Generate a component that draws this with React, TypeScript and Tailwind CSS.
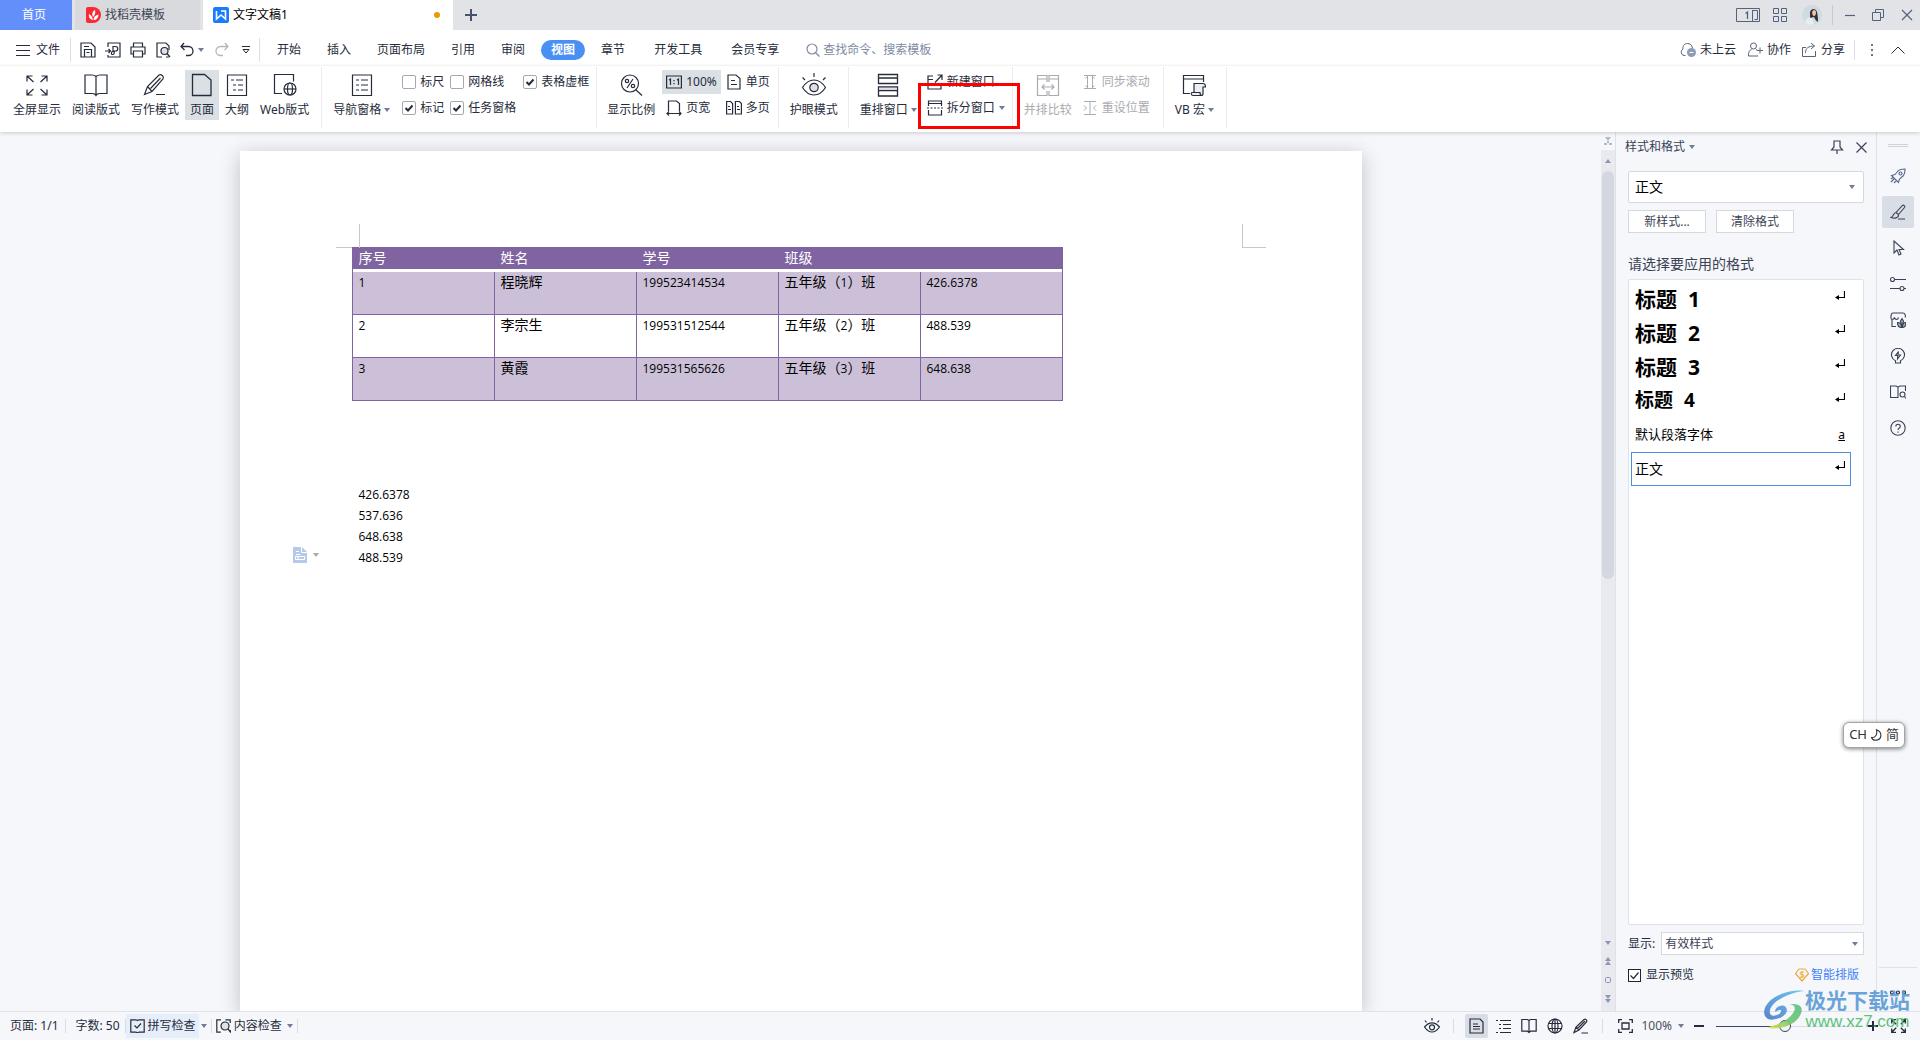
import type { ReactNode } from "react";

type IconProps = { w?: number; h?: number; sw?: number; className?: string; children: ReactNode };

function Svg({ w = 16, h = 16, sw = 1, className = "", children }: IconProps) {
  return (
    <svg
      width={w}
      height={h}
      viewBox={`0 0 ${w} ${h}`}
      fill="none"
      stroke="currentColor"
      strokeWidth={sw}
      className={`shrink-0 ${className}`}
      aria-hidden="true"
    >
      {children}
    </svg>
  );
}

function Caret({ className = "text-[#6f7c98]" }: { className?: string }) {
  return (
    <Svg w={6} h={4} className={className}>
      <path d="M0 0h6L3 4z" fill="currentColor" stroke="none" />
    </Svg>
  );
}

function Big({ icon, label, caret, active, muted }: { icon: ReactNode; label: string; caret?: boolean; active?: boolean; muted?: boolean }) {
  return (
    <button
      className={`flex h-[50px] shrink-0 flex-col items-center gap-[5px] px-[5px] pt-[3px] whitespace-nowrap ${active ? "bg-[#dbe0e5]" : ""} ${muted ? "text-[#a9abb0]" : ""}`}
    >
      {icon}
      <span className="flex items-center gap-[3px] leading-4">
        {label}
        {caret && <Caret />}
      </span>
    </button>
  );
}

function Small({ icon, label, caret, active, muted, children }: { icon: ReactNode; label: string; caret?: boolean; active?: boolean; muted?: boolean; children?: ReactNode }) {
  return (
    <button
      className={`relative flex h-6 shrink-0 items-center gap-1 px-1 whitespace-nowrap ${active ? "bg-[#dbe0e5]" : ""} ${muted ? "text-[#a9abb0]" : ""}`}
    >
      {icon}
      <span className="leading-4">{label}</span>
      {caret && <Caret />}
      {children}
    </button>
  );
}

function Check({ label, checked }: { label: string; checked?: boolean }) {
  return (
    <label className="flex h-6 items-center gap-1 whitespace-nowrap">
      <span className="relative flex size-[14px]">
        <input
          type="checkbox"
          defaultChecked={checked}
          className="peer size-[14px] appearance-none rounded-[2px] border border-[#a3a8b3] bg-white"
        />
        <Svg w={14} h={14} sw={2} className="pointer-events-none absolute inset-0 hidden peer-checked:block">
          <path d="M3.5 7l2.500 2.500 4.500-5" />
        </Svg>
      </span>
      <span className="leading-4">{label}</span>
    </label>
  );
}

function Group({ children, className }: { children: ReactNode; className: string }) {
  return <div className={`flex h-[61px] shrink-0 gap-px border-r border-[#ebecee] pt-[3px] ${className}`}>{children}</div>;
}

function Globe() {
  return (
    <Svg sw={1.2}>
      <circle cx="8" cy="8" r="7" />
      <ellipse cx="8" cy="8" rx="3" ry="7" />
      <path d="M1.500 5.500h13M1.500 10.500h13M8 1v14" />
    </Svg>
  );
}

function TitleBar() {
  return (
    <header className="flex h-[30px] items-stretch bg-[#e1e3e7]">
      <button className="w-[72px] bg-[#638ffb] pr-1 text-white">首页</button>
      <button className="ml-[3px] flex w-[125px] items-center gap-1 bg-[#d9dadd] pl-[11px] text-[#3f4454]">
        <Svg w={15} h={16}>
          <path d="M0 2a2 2 0 0 1 2-2h5a8 8 0 0 1 0 16H2a2 2 0 0 1-2-2z" fill="#fa2a35" stroke="none" />
          <path d="M7 13C3 12 2.500 9 3 7c2 1 3.500 3 4 6zM7 10C5.500 7 6.500 4.500 9 3c.8 3 0 5-2 7zM7.500 13c0-3 2-5 5-5.500C12.500 11 10.500 13 7.500 13z" fill="#fff" stroke="none" />
        </Svg>
        找稻壳模板
      </button>
      <div className="ml-[3px] flex w-[250px] items-center gap-1 bg-white pl-[10px] pr-[13px] text-black">
        <Svg>
          <rect width="16" height="16" rx="2" fill="#1a7cfb" stroke="none" />
          <path d="M3.500 4v8l4.500-4 4.500 4V4H8" stroke="#fff" strokeWidth="1.600" />
        </Svg>
        <span className="flex-1">文字文稿1</span>
        <span className="size-[6px] rounded-full bg-[#e69b00]" />
      </div>
      <button aria-label="新建" className="ml-3 text-[#47526f]">
        <Svg w={12} h={12} sw={2}>
          <path d="M6 0v12M0 6h12" />
        </Svg>
      </button>
      <div className="ml-auto flex items-center pr-[7px] text-[#54617f]">
        <button aria-label="窗口">
          <Svg w={24} h={14}>
            <path d="M.5 .5h23v13H.5zM16.500 2.500h5v9M16.500 2v11.500M18.500 11.500h3" />
            <path d="M9.500 5.500l2-1.500v7" strokeWidth="1.300" />
          </Svg>
        </button>
        <button aria-label="应用" className="ml-[13px]">
          <Svg w={14} h={14}>
            <path d="M.5.5h5v5h-5zM8.500.5h5v5h-5zM.5 8.500h5v5h-5zM8.500 8.500h5v5h-5z" />
          </Svg>
        </button>
        <button aria-label="账户" className="ml-[15px]">
          <Svg w={20} h={20}>
            <circle cx="10" cy="10" r="10" fill="#cfdbe0" stroke="none" />
            <path d="M8 7c1-4 6-4 7 0 1 4 1 8 1 10-2-1-3-3-4-5-2 0-3 1-4 2z" fill="#3a3036" stroke="none" />
            <path d="M10.500 6c1.500-2 3.500-1 3.500 1.500s-1 3.500-2 3.500-2.500-2.500-1.500-5z" fill="#eec4b0" stroke="none" />
            <path d="M3 17c2-5 5-5 7-4l2 6c-4 2-7 0-9-2z" fill="#e6eef1" stroke="none" />
          </Svg>
        </button>
        <span className="ml-[10px] h-5 w-px bg-[#c6c9d0]" />
        <button aria-label="最小化" className="ml-3">
          <Svg w={10} h={12} sw={1.2}>
            <path d="M0 6.500h10" />
          </Svg>
        </button>
        <button aria-label="还原" className="ml-[17px]">
          <Svg w={12} h={12}>
            <path d="M.5 3.500h8v8h-8zM3.500 3V.5h8v8H9" />
          </Svg>
        </button>
        <button aria-label="关闭" className="ml-[17px]">
          <Svg w={12} h={12} sw={1.2}>
            <path d="M1 1l10 10M11 1L1 11" />
          </Svg>
        </button>
      </div>
    </header>
  );
}

const MENU_A = ["开始", "插入", "页面布局", "引用", "审阅"];

function MenuRow() {
  return (
    <nav className="flex h-9 items-center bg-white pt-[3px] pr-[15px]">
      <button className="ml-4 flex items-center gap-[6px]">
        <Svg w={14} h={12}>
          <path d="M0 1.500h14M0 6.500h14M0 11.500h14" />
        </Svg>
        文件
      </button>
      <span className="ml-[10px] h-6 w-px bg-[#dcdee2]" />
      <div className="ml-[9px] flex items-center">
        <button aria-label="保存">
          <Svg sw={1.2}>
            <path d="M1 1h10l4 4v10H1zM4.500 15V7.500h7V15M4 4.500h5M6.500 10.500h3" />
          </Svg>
        </button>
        <button aria-label="输出为PDF" className="ml-[9px]">
          <Svg sw={1.2}>
            <path d="M3 5V1h12v14H3v-2M0 9h5M3.500 7l2 2-2 2M8 10V4.500h2.500a2 2 0 0 1 0 4.500H8.500c-2 0-3 3.500-1 3.500s2-2 1.500-3.500" />
          </Svg>
        </button>
        <button aria-label="打印" className="ml-[9px]">
          <Svg sw={1.2}>
            <path d="M3.500 5V1h9v4M3.500 12H1V5h14v7h-2.500M3.500 9h9v6h-9z" />
          </Svg>
        </button>
        <button aria-label="打印预览" className="ml-[9px]">
          <Svg sw={1.2}>
            <path d="M7 15H2V1h9l3 3v4M14 15h-3" />
            <circle cx="9.500" cy="9" r="3.500" fill="#dfe1e5" />
            <path d="M12 11.500l3 3.500" />
          </Svg>
        </button>
        <button aria-label="撤销" className="ml-[9px]">
          <Svg sw={1.3} w={14}>
            <path d="M4 1L1 4.500 4.500 8M1 4.500h7.500a4.500 4.500 0 0 1 0 9H6" />
          </Svg>
        </button>
        <button aria-label="撤销列表" className="ml-1">
          <Caret />
        </button>
        <button aria-label="恢复" className="ml-[11px] text-[#b4b6bb]">
          <Svg sw={1.3} w={14}>
            <path d="M10 1l3 3.500L9.500 8M13 4.500H5.500a4.500 4.500 0 0 0 0 9H8" />
          </Svg>
        </button>
        <button aria-label="自定义" className="ml-[13px]">
          <Svg w={8} h={10}>
            <path d="M0 1.500h8M1 4.500h6L4 8z" />
          </Svg>
        </button>
      </div>
      <span className="ml-[9px] h-6 w-px bg-[#dcdee2]" />
      <div className="ml-1 flex items-center">
        {MENU_A.map((m) => (
          <button key={m} className="px-[13px]">
            {m}
          </button>
        ))}
        <button className="mx-[3px] h-5 rounded-full bg-[#4a90f4] px-[10px] font-bold text-white">视图</button>
        <button className="px-[13px]">章节</button>
        <button className="px-4">开发工具</button>
        <button className="px-[13px]">会员专享</button>
      </div>
      <label className="ml-[14px] flex items-center gap-[3px] text-[#7e8aa3]">
        <Svg w={14} h={14} sw={1.2}>
          <circle cx="6" cy="6" r="5" />
          <path d="M9.500 9.500l4 4" />
        </Svg>
        <input aria-label="搜索" placeholder="查找命令、搜索模板" className="w-[120px] bg-transparent outline-none placeholder:text-[#7e8aa3]" />
      </label>
      <div className="ml-auto flex items-center">
        <button className="flex items-center gap-1">
          <Svg className="text-[#596276]">
            <path d="M5.500 13.500H4a3.500 3.500 0 0 1-1-6.500C2.500 3 5 1.500 7.500 1.500S12 3 12.500 6" />
            <circle cx="11.500" cy="10.500" r="4.500" fill="#8f9bb5" stroke="none" />
            <path d="M9.500 10.500h4" stroke="#fff" />
          </Svg>
          未上云
        </button>
        <button className="ml-[11px] flex items-center gap-1">
          <Svg className="text-[#596276]">
            <circle cx="6.500" cy="4" r="3" />
            <path d="M4.500 7.500C2 8.500 1.500 10 1.500 14h9.500M9 7.500c1 .5 1.500 1 2 1.500M13 5.500v6M10 8.500h6" />
          </Svg>
          协作
        </button>
        <button className="ml-[10px] flex items-center gap-1">
          <Svg className="text-[#596276]">
            <path d="M5 5.500H1.500v9h13V9M4.500 11c0-5 3-7 9-7M10 1l3.500 3L10 7" />
          </Svg>
          分享
        </button>
        <span className="ml-[9px] h-5 w-px bg-[#dcdee2]" />
        <button aria-label="更多" className="ml-4">
          <Svg w={2} h={12} className="text-[#6c7382]">
            <path d="M0 0h2v2H0zM0 5h2v2H0zM0 10h2v2H0z" fill="currentColor" stroke="none" />
          </Svg>
        </button>
        <button aria-label="折叠功能区" className="ml-[18px]">
          <Svg w={14} h={8}>
            <path d="M.5 7.500L7 1l6.500 6.500" />
          </Svg>
        </button>
      </div>
    </nav>
  );
}

function Ribbon() {
  return (
    <section className="relative z-10 flex h-[66px] bg-white pt-px shadow-[0_1px_4px_rgba(0,0,0,0.18)]">
      <Group className="pr-[7px] pl-2">
        <Big
          label="全屏显示"
          icon={
            <Svg w={24} h={24} sw={1.2}>
              <path d="M2 8.500V3h5.500M2 3l6.500 6M16.500 3H22v5.500M22 3l-6.500 6M2 16.500V22h5.500M2 22l6.500-6M16.500 22H22v-5.500M22 22l-6.500-6" />
            </Svg>
          }
        />
        <Big
          label="阅读版式"
          icon={
            <Svg w={24} h={24} sw={1.2}>
              <path d="M12 3.500C11 2.500 10 2 8 2H1v18.500h7.500c2 0 3 1 3.500 2 .5-1 1.500-2 3.500-2H23V2h-7c-2 0-3 .5-4 1.500zM12 3.500v19" />
            </Svg>
          }
        />
        <Big
          label="写作模式"
          icon={
            <Svg w={24} h={24} sw={1.2}>
              <path d="M1.500 21.500l3-8L16 2c2-1.500 5.500 1.500 4 4L9 18.500zM4.500 13.500l4.500 5M7.500 15.500L17.500 5M13 21.500h9" />
            </Svg>
          }
        />
        <Big
          active
          label="页面"
          icon={
            <Svg w={24} h={24} sw={1.3}>
              <path d="M2.500 1.500h12l6.500 5.500v15.500H2.500z" />
            </Svg>
          }
        />
        <Big
          label="大纲"
          icon={
            <Svg w={24} h={24} sw={1.2}>
              <path d="M2.500 2h19v20.500h-19zM6 7h3M8 12h3M8 17h3M11 7h7M13 12h5M13 17h5" />
            </Svg>
          }
        />
        <Big
          label="Web版式"
          icon={
            <Svg w={24} h={24} sw={1.2}>
              <path d="M9 20.500H1.500v-19h19v7" />
              <circle cx="17" cy="16" r="6" />
              <ellipse cx="17" cy="16" rx="2.500" ry="6" />
              <path d="M11 16h12" />
            </Svg>
          }
        />
      </Group>
      <Group className="pr-2 pl-[6px]">
        <Big
          caret
          label="导航窗格"
          icon={
            <Svg w={24} h={24} sw={1.2}>
              <path d="M2.500 2h19v20.500h-19zM6 7h3M6 12h3M6 17h3M11 7h7M11 12h7M11 17h7" />
            </Svg>
          }
        />
        <div className="ml-[6px] grid grid-cols-[48px_73px_65px] content-start gap-y-[2px]">
          <Check label="标尺" />
          <Check label="网格线" />
          <Check label="表格虚框" checked />
          <Check label="标记" checked />
          <Check label="任务窗格" checked />
        </div>
      </Group>
      <Group className="pr-1 pl-[5px]">
        <Big
          label="显示比例"
          icon={
            <Svg w={24} h={24} sw={1.2}>
              <circle cx="11" cy="10.500" r="8.500" />
              <path d="M17 17l6 5.500M14 6l-6 9" />
              <circle cx="8" cy="8" r="1.700" />
              <circle cx="14" cy="13" r="1.700" />
            </Svg>
          }
        />
        <div className="ml-px flex flex-col items-start gap-[2px]">
          <Small
            active
            label="100%"
            icon={
              <Svg sw={1.2}>
                <path d="M.6 2h14.800v12H.6zM3 6l1.500-1v6M11 6l1.500-1v6M8 6v1.300M8 9v1.300" />
              </Svg>
            }
          />
          <Small
            label="页宽"
            icon={
              <Svg sw={1.2}>
                <path d="M2.500 11V1h8l3 2.500V11M1 13.500h14M3 11.500l-2 2 2 2M13 11.500l2 2-2 2" />
              </Svg>
            }
          />
        </div>
        <div className="flex flex-col items-start gap-[2px]">
          <Small
            label="单页"
            icon={
              <Svg sw={1.2}>
                <path d="M2 1h8l4 3.500V15H2zM5 6.500h4M5 10.500h6" />
              </Svg>
            }
          />
          <Small
            label="多页"
            icon={
              <Svg sw={1.2}>
                <path d="M.6 1.500h4l2 2V14h-6zM9.400 1.500h4l2 2V14h-6zM2 6.500h2M2 9.500h3M11 6.500h2M11 9.500h3" />
              </Svg>
            }
          />
        </div>
      </Group>
      <Group className="pr-[5px] pl-[6px]">
        <Big
          label="护眼模式"
          icon={
            <Svg w={24} h={24} sw={1.2}>
              <path d="M.5 14.500C4 9 8 7 12 7s8 2 11.500 7.500C20 20 16 22 12 22S4 20 .5 14.500zM12 4V0M3 7L.5 4.500M21 7l2.500-2.500" />
              <circle cx="12" cy="14.500" r="4.200" fill="#dfe1e5" />
            </Svg>
          }
        />
      </Group>
      <Group className="pr-[3px] pl-[6px]">
        <Big
          caret
          label="重排窗口"
          icon={
            <Svg w={24} h={24} sw={1.3}>
              <path d="M2.500 1.500h19v9h-19zM2.500 14h19v9h-19z" />
              <path d="M2.500 5h19M2.500 17.500h19" />
              <path d="M3 15.700h18" stroke="#dfe1e5" strokeWidth="2" />
            </Svg>
          }
        />
        <div className="flex flex-col items-start gap-[2px]">
          <Small
            label="新建窗口"
            icon={
              <Svg sw={1.2}>
                <path d="M6 2H1v13h13v-5M1 5.500h5M8 8.500L15 1M10.500 1H15v5" />
              </Svg>
            }
          />
          <Small
            caret
            label="拆分窗口"
            icon={
              <Svg sw={1.2}>
                <path d="M1.500 6V1h13v5M1.500 3.500h13M1.500 10v5h13v-5" />
                <path d="M0 8h16" strokeDasharray="2 1.500" />
              </Svg>
            }
          >
            <span className="pointer-events-none absolute -top-[13px] -right-[11px] -bottom-[9px] -left-[5px] z-20 border-[3px] border-[#fe0000]" />
          </Small>
        </div>
      </Group>
      <Group className="pr-[9px] pl-[6px]">
        <Big
          muted
          label="并排比较"
          icon={
            <Svg w={24} h={24} sw={1.2}>
              <path d="M8 22.500H1.500v-20h9.500V9M16 22.500h6.500v-20H13V9M1.500 6H11M13 6h9.500M11 18v4.500H8M13 18v4.500h3M6 14h12M8.500 11.500L6 14l2.500 2.500M15.500 11.500L18 14l-2.500 2.500" />
            </Svg>
          }
        />
        <div className="flex flex-col items-start gap-[2px]">
          <Small
            muted
            label="同步滚动"
            icon={
              <Svg>
                <path d="M2 1.500h12M2 14.500h12M5.500 2v12M10.500 2v12M3.500 4.500l2-2M12.500 4.500l-2-2M3.500 11.500l2 2M12.500 11.500l-2 2" />
              </Svg>
            }
          />
          <Small
            muted
            label="重设位置"
            icon={
              <Svg>
                <path d="M2 1.500h12M2 14.500h12M8 2v12M2 5.500L4.500 8 2 10.500M14 5.500L11.500 8l2.500 2.500" />
              </Svg>
            }
          />
        </div>
      </Group>
      <Group className="pr-[7px] pl-[6px]">
        <Big
          caret
          label="VB 宏"
          icon={
            <Svg w={24} h={24} sw={1.2}>
              <path d="M8 20.500H1.500v-18h20V9M1.500 6h20" />
              <path d="M12 19v-8.500h9c2 0 2.500 1 2.500 3.500H21v6.500c0 1.500-1 2-2 2h-8c-2 0-2-3-1-3h8c0 2 .5 3 1.500 3" fill="#eceef0" />
            </Svg>
          }
        />
      </Group>
    </section>
  );
}

function Num({ children }: { children: ReactNode }) {
  return <span className="font-['Open_Sans','Noto_Sans',sans-serif] text-xs">{children}</span>;
}

const ROWS = [
  ["1", "程晓辉", "199523414534", "1", "426.6378"],
  ["2", "李宗生", "199531512544", "2", "488.539"],
  ["3", "黄霞", "199531565626", "3", "648.638"],
];

const VALUES = ["426.6378", "537.636", "648.638"];

function DocumentPage() {
  return (
    <main className="flex flex-1 justify-center overflow-hidden pt-[19px]">
      <article className="relative w-[1122px] shrink-0 bg-white px-28 pt-24 text-sm leading-[21px] text-black shadow-[0_4px_20px_rgba(0,0,0,0.22)]">
        <span className="absolute top-[73px] left-[119px] h-6 w-px bg-[#c8c8c8]" />
        <span className="absolute top-24 left-24 h-px w-4 bg-[#c8c8c8]" />
        <span className="absolute top-[73px] right-24 h-6 w-6 border-b border-l border-[#c8c8c8]" />
        <table className="w-[711px] table-fixed border-separate border-spacing-0 border-x border-[#8064a2]">
          <colgroup>
            <col className="w-[142px]" />
            <col className="w-[142px]" />
            <col className="w-[142px]" />
            <col className="w-[142px]" />
            <col />
          </colgroup>
          <thead>
            <tr>
              {["序号", "姓名", "学号", "班级", ""].map((h) => (
                <th key={h} className="h-[25px] border-b-[3px] border-white bg-[#8064a2] p-0 pl-[6px] text-left leading-5 font-normal text-white">
                  {h}
                </th>
              ))}
            </tr>
          </thead>
          <tbody>
            {ROWS.map((r) => (
              <tr key={r[0]} className="align-top leading-[19px] odd:bg-[#ccc0d9]">
                {r.map((c, i) => (
                  <td key={i} className="h-[43px] border-r border-b border-[#8064a2] p-0 pl-[6px] last:border-r-0">
                    {i === 1 ? (
                      c
                    ) : i === 3 ? (
                      <>
                        五年级（<Num>{c}</Num>）班
                      </>
                    ) : (
                      <Num>{c}</Num>
                    )}
                  </td>
                ))}
              </tr>
            ))}
          </tbody>
        </table>
        <div className="pt-[82px] pl-[7px]">
          {VALUES.map((v) => (
            <p key={v}>
              <Num>{v}</Num>
            </p>
          ))}
          <div className="relative">
            <Num>488.539</Num>
            <button aria-label="粘贴选项" className="absolute top-px -left-[66px] flex items-center gap-[6px]">
              <Svg w={14} h={16}>
                <path d="M0 0h9l5 5v11H0z" fill="#b5c9e8" stroke="none" />
                <path d="M8.500 0v5.500H14M3 4.500h3M3 7.500h4M2.500 12.500v-3h9v3zM5 9v4" stroke="#fff" />
              </Svg>
              <Caret className="text-[#a9a9a9]" />
            </button>
          </div>
        </div>
      </article>
    </main>
  );
}

function ScrollColumn() {
  return (
    <div className="flex w-[15px] shrink-0 flex-col items-center border-r border-[#dfe1e6] bg-[#e8eaef] text-[#8c97b2]">
      <div className="flex h-[18px] w-full items-center justify-center bg-[#f5f7fa]">
        <Svg w={8} h={9} className="text-[#b3bacb]">
          <path d="M1 0h6L4 4zM3 4h2v2H3zM0 6h3v2H0zM5 6h3v2H5z" fill="currentColor" stroke="none" />
        </Svg>
      </div>
      <button aria-label="向上" className="flex h-[21px] items-center">
        <Svg w={6} h={4}>
          <path d="M0 4h6L3 0z" fill="currentColor" stroke="none" />
        </Svg>
      </button>
      <div className="w-full flex-1">
        <div className="mx-auto h-[53%] w-3 rounded-full bg-[#d4d7e0]" />
      </div>
      <div className="flex flex-col items-center gap-3 pb-2">
        <button aria-label="向下">
          <Caret className="text-[#8c97b2]" />
        </button>
        <button aria-label="上一页">
          <Svg w={6} h={8}>
            <path d="M0 4h6L3 0zM0 8h6L3 4z" fill="currentColor" stroke="none" />
          </Svg>
        </button>
        <button aria-label="选择浏览对象">
          <Svg w={6} h={6}>
            <rect x=".5" y=".5" width="5" height="5" rx="1" />
          </Svg>
        </button>
        <button aria-label="下一页">
          <Svg w={6} h={8}>
            <path d="M0 0h6L3 4zM0 4h6L3 8z" fill="currentColor" stroke="none" />
          </Svg>
        </button>
      </div>
    </div>
  );
}

const STYLES = [
  { name: "标题", level: "1", cls: "text-[21px] font-bold" },
  { name: "标题", level: "2", cls: "text-[21px] font-bold" },
  { name: "标题", level: "3", cls: "text-[21px] font-bold" },
  { name: "标题", level: "4", cls: "text-[19px] font-bold" },
  { name: "默认段落字体", level: "", cls: "text-[13px]" },
  { name: "正文", level: "", cls: "text-sm" },
];

function StylePanel() {
  return (
    <aside className="flex w-[260px] shrink-0 flex-col px-3 pb-[26px] text-[#3b4256]">
      <div className="flex h-[30px] items-center">
        <h2 className="-ml-[3px] flex items-center gap-1">
          样式和格式
          <Caret />
        </h2>
        <button aria-label="固定" className="ml-auto">
          <Svg w={14} h={14} sw={1.2}>
            <path d="M4 1h6v6l2.500 3h-11L4 7zM7 10v4" />
          </Svg>
        </button>
        <button aria-label="关闭面板" className="ml-3 -mr-[3px]">
          <Svg w={11} h={11} sw={1.2}>
            <path d="M.5.5l10 10M10.500.5l-10 10" />
          </Svg>
        </button>
      </div>
      <div className="relative mt-[9px]">
        <select aria-label="当前样式" className="h-8 w-full appearance-none rounded-[2px] border border-[#d5d8de] bg-white pl-[6px] text-sm text-black">
          <option>正文</option>
        </select>
        <span className="pointer-events-none absolute inset-y-0 right-[9px] flex items-center">
          <Caret />
        </span>
      </div>
      <div className="mt-[7px] flex gap-[10px]">
        <button className="h-[23px] w-[78px] border border-[#d5d8de] bg-white">新样式...</button>
        <button className="h-[23px] w-[78px] border border-[#d5d8de] bg-white">清除格式</button>
      </div>
      <h3 className="mt-[21px] text-sm leading-5">请选择要应用的格式</h3>
      <ul className="mt-[5px] flex-1 rounded-[2px] border border-[#dfe2e7] bg-white pt-[2px] pr-3 pl-[2px] text-black">
        {STYLES.map((s, i) => (
          <li key={s.name + s.level}>
            <button
              className={`flex h-[34px] w-full items-center justify-between border pr-[5px] pl-[3px] text-left ${i === 5 ? "border-[#4a90e2]" : "border-transparent"}`}
            >
              <span className={`flex gap-[11px] ${s.cls}`}>
                {s.name}
                {s.level && <span>{s.level}</span>}
              </span>
              {i === 4 ? (
                <span className="text-xs leading-4 underline">a</span>
              ) : (
                <Svg w={10} h={18} sw={1.2}>
                  <path d="M9.500 1v6.500H2" />
                  <path d="M0 7.500l4-2.500v5z" fill="currentColor" stroke="none" />
                </Svg>
              )}
            </button>
          </li>
        ))}
      </ul>
      <label className="mt-[7px] flex items-center gap-[6px] text-[#262c3b]">
        显示:
        <span className="relative flex-1">
          <select className="h-[23px] w-full appearance-none border border-[#d5d8de] bg-white pl-[3px] text-xs text-[#3b4256]">
            <option>有效样式</option>
          </select>
          <span className="pointer-events-none absolute inset-y-0 right-[6px] flex items-center">
            <Caret />
          </span>
        </span>
      </label>
      <div className="mt-[10px] flex h-5 items-center justify-between">
        <label className="flex items-center gap-[5px] text-[#262c3b]">
          <span className="relative flex size-[13px]">
            <input type="checkbox" defaultChecked className="peer size-[13px] appearance-none border border-[#1f2430] bg-white" />
            <Svg w={13} h={13} sw={1.2} className="pointer-events-none absolute inset-0 hidden peer-checked:block">
              <path d="M2.500 6.500l3 3 5-6" />
            </Svg>
          </span>
          显示预览
        </label>
        <a href="#layout" className="flex items-center gap-[2px] pr-[5px] text-[#417ff9]">
          <Svg w={14} h={14} sw={1.2} className="text-[#f0a83c]">
            <path d="M4 1h6l3.500 4.500L7 13 .5 5.500z" strokeLinejoin="round" />
            <path d="M9 4H6.500a1.300 1.300 0 0 0 0 2.600h1a1.300 1.300 0 0 1 0 2.600H5M7 3v7" strokeWidth="1" />
          </Svg>
          智能排版
        </a>
      </div>
    </aside>
  );
}

const RAIL: { label: string; icon: ReactNode }[] = [
  {
    label: "快捷",
    icon: (
      <>
        <path d="M5 6.500L8 3c2-2 5-2 7-2 0 2 0 5-2 7l-3.500 3-1 3.500-2-2-3-3-2-2zM4 11l-3 3M6.500 12.500L4 15M3 9.500l-2 1.500" />
        <circle cx="10.500" cy="5.500" r="1.500" />
      </>
    ),
  },
  { label: "样式", icon: <path d="M6 8.500L12.500 1.500c1-1 3 .5 2 2L8.500 10.500M6 8.500c-3 0-2 4-5 5 3 1 8 1 7.500-3zM6 8.500l2.500 2M8 15h7" /> },
  { label: "选择", icon: <path d="M4 1v12l3-3 2 5 2-1-2-4.500h4.500z" /> },
  {
    label: "设置",
    icon: (
      <>
        <circle cx="2.500" cy="3.500" r="2" />
        <circle cx="12" cy="12.500" r="2" />
        <path d="M4.500 3.500H16M0 12.500h10M14 12.500h2" />
      </>
    ),
  },
  {
    label: "素材",
    icon: (
      <>
        <path d="M2 7.500v7h4M2 7.500C0 6.500 1 1 3 1h10c2 0 3 3 2 4.500M2 7.500c2 0 2.500-2 2.500-2s.5 2 2 2 2-2 2-2" />
        <path d="M10.500 9l1.500-2.500L13.500 9 12 15zM7.500 10.500c2.500 0 4 2 4 5-2.500 0-4-2-4-5zM16 10.500c-2.500 0-3.500 2-3.500 5 2.500 0 3.500-2 3.500-5z" fill="#a9aeb9" />
      </>
    ),
  },
  { label: "灵感", icon: <path d="M5.500 12.800a6.500 6.500 0 1 1 5 0V15h-5zM8.500 3.500L5.500 7.500h2.300l-.3 3.500 3-4H8z" /> },
  {
    label: "检索",
    icon: (
      <>
        <path d="M8 3L6 2H.5v11.500H8V3l2-1h5.500v5" />
        <circle cx="12.500" cy="10.500" r="2.500" />
        <path d="M14.500 12.500l1.500 2" />
      </>
    ),
  },
  {
    label: "帮助",
    icon: (
      <>
        <circle cx="8" cy="8" r="7.200" />
        <path d="M5.800 6.500c0-3 4.500-3 4.500 0 0 1.500-2.300 1.500-2.300 3.500M8 11.500v1.300" />
      </>
    ),
  },
];

function Rail() {
  return (
    <aside className="flex w-11 shrink-0 flex-col items-center border-l border-[#dfe1e6] pt-3 pr-[2px]">
      <span className="mb-[13px] h-[3px] w-5 border-y border-[#cfd2d9]" />
      <div className="flex flex-col gap-1">
        {RAIL.map((r, i) => (
          <button
            key={r.label}
            aria-label={r.label}
            className={`flex size-8 items-center justify-center rounded-[2px] ${i === 1 ? "bg-[#d9dde5]" : ""} ${i === 0 ? "text-[#5a688c]" : "text-[#3b4256]"}`}
          >
            <Svg sw={1.1}>{r.icon}</Svg>
          </button>
        ))}
      </div>
      <div className="mt-auto flex w-[38px] justify-center border-t border-[#dfe1e6] pt-[22px] pb-4">
        <button aria-label="更多工具">
          <Svg w={16} h={5} sw={1.2}>
            <circle cx="2" cy="2.500" r="1.500" />
            <circle cx="8" cy="2.500" r="1.500" />
            <circle cx="14" cy="2.500" r="1.500" />
          </Svg>
        </button>
      </div>
    </aside>
  );
}

function Sep() {
  return <span className="h-[14px] w-px bg-[#d9dce2]" />;
}

function StatusBar() {
  return (
    <footer className="flex h-[29px] items-center border-t border-[#e0e2e6] pr-[14px]">
      <button className="mr-[6px] ml-[10px]">页面: 1/1</button>
      <Sep />
      <button className="mr-[5px] ml-[10px]">字数: 50</button>
      <Sep />
      <button className="flex h-6 items-center gap-[3px] bg-[#e6eefa] pr-[3px] pl-1">
        <Svg w={15} h={14} sw={1.2}>
          <path d="M6 .8H.8v12.400h5.200l1.500 .8 1.500-.8h5.200V.8H9L7.500 1.600zM4.500 6.500l2.500 2.500 4-4.500" />
        </Svg>
        拼写检查
      </button>
      <button aria-label="拼写检查选项" className="mr-1 ml-[2px]">
        <Caret />
      </button>
      <Sep />
      <button className="ml-1 flex items-center gap-[3px]">
        <Svg w={15} h={14} sw={1.2}>
          <path d="M5 .8H.8v12.400h4M9.500 .8h4.700V4M14.200 11v2.200" />
          <circle cx="9" cy="7" r="4" fill="#dfe1e5" />
          <path d="M12 10l3 3.500" />
        </Svg>
        内容检查
      </button>
      <button aria-label="内容检查选项" className="mr-1 ml-[5px]">
        <Caret />
      </button>
      <Sep />
      <div className="ml-auto flex items-center">
        <button aria-label="护眼" className="mr-[13px]">
          <Svg sw={1.2}>
            <path d="M.5 9C3 6 5.500 4.800 8 4.800S13 6 15.500 9C13 12.500 10.500 14 8 14S3 12.500 .5 9zM8 2.500V0M2.500 4.500L1 2.500M13.500 4.500L15 2.500" />
            <circle cx="8" cy="9.300" r="2.500" />
          </Svg>
        </button>
        <Sep />
        <button aria-label="页面视图" className="ml-[11px] flex h-6 w-[23px] items-center justify-center rounded-[2px] bg-[#d9dde5]">
          <Svg w={15} sw={1.2}>
            <path d="M1 1h10l3 3v11H1zM4 6h5M4 8.500h7M4 11h7" />
          </Svg>
        </button>
        <button aria-label="大纲视图" className="ml-2">
          <Svg w={15} sw={1.2}>
            <path d="M0 2.500h2M4 2.500h11M3 6.500h2M7 6.500h8M3 10.500h2M7 10.500h8M0 14.500h2M4 14.500h11" />
          </Svg>
        </button>
        <button aria-label="阅读视图" className="ml-[10px]">
          <Svg sw={1.2}>
            <path d="M8 2.500L6.500 1.500H.8v11.700h5.700L8 14.500l1.500-1.300h5.700V1.500H9.500zM8 2.500v12" />
          </Svg>
        </button>
        <button aria-label="Web视图" className="ml-[10px]">
          <Globe />
        </button>
        <button aria-label="写作视图" className="mr-[13px] ml-[10px]">
          <Svg sw={1.2}>
            <path d="M1 14.500l2-5.500L11 1.500c1.500-1 3.500.5 2.500 2.500L6 12zM3 9l3 3M4.500 10.500L12 3M8.500 15H15" />
          </Svg>
        </button>
        <Sep />
        <button aria-label="适合窗口" className="ml-[15px]">
          <Svg w={15} h={14} sw={1.3}>
            <path d="M.7 4V.7H4M11 .7h3.300V4M.7 10v3.300H4M11 13.300h3.300V10M4 4h7v6H4z" />
          </Svg>
        </button>
        <button className="ml-2 flex items-center gap-[6px] text-[#4a5163]">
          100%
          <Caret />
        </button>
        <button aria-label="缩小" className="ml-[10px]">
          <Svg w={10} h={10} sw={2}>
            <path d="M0 5h10" />
          </Svg>
        </button>
        <input
          type="range"
          aria-label="缩放"
          defaultValue={50}
          className="ml-3 h-3 w-[138px] appearance-none bg-[linear-gradient(to_right,#3b4766_50%,#d9dce3_50%)] bg-[length:100%_1px] bg-center bg-no-repeat [&::-webkit-slider-thumb]:size-3 [&::-webkit-slider-thumb]:appearance-none [&::-webkit-slider-thumb]:rounded-full [&::-webkit-slider-thumb]:border [&::-webkit-slider-thumb]:border-[#3b4256] [&::-webkit-slider-thumb]:bg-[#f5f7fa]"
        />
        <button aria-label="放大" className="ml-[14px]">
          <Svg w={10} h={10} sw={2}>
            <path d="M0 5h10M5 0v10" />
          </Svg>
        </button>
        <button aria-label="全屏" className="ml-[13px]">
          <Svg w={15} h={14} sw={1.3}>
            <path d="M.7 4.500V.7H5M.7.7l4.500 4.500M10 .7h4.300v3.800M14.300.7L9.800 5.200M.7 9.500v3.800H5M.7 13.300l4.500-4.500M10 13.300h4.300V9.500M14.300 13.300L9.800 8.800" />
          </Svg>
        </button>
      </div>
    </footer>
  );
}

function Watermark() {
  return (
    <div className="pointer-events-none absolute right-[10px] bottom-2 z-20 flex items-center opacity-90">
      <svg width="42" height="40" viewBox="0 0 44 42" aria-hidden="true">
        <defs>
          <linearGradient id="wm-blue" x1="0" y1="1" x2="1" y2="0">
            <stop offset="0" stopColor="#4a78c8" />
            <stop offset="1" stopColor="#5ec4ee" />
          </linearGradient>
          <linearGradient id="wm-green" x1="0" y1="1" x2="1" y2="0">
            <stop offset="0" stopColor="#f2e84a" />
            <stop offset="0.500" stopColor="#6cc46f" />
            <stop offset="1" stopColor="#5bbf86" />
          </linearGradient>
        </defs>
        <path d="M43 1C30-1 8 5 2 19c-3 8 2 13 9 12 8-1 14-5 14-10 0-4-4-6-8-4-3 1-5 4-4 6 2-2 6-3 6-1 0 3-5 5-8 5-4 0-5-4-3-8C12 11 27 3 43 1z" fill="url(#wm-blue)" />
        <path d="M27 15c7 0 8 5 4 10C25 33 14 37 4 39c6 3 20 1 27-4 8-5 11-13 9-17-2-3-8-4-13-3z" fill="url(#wm-green)" />
      </svg>
      <div className="flex flex-col items-center">
        <span className="text-[21px] leading-6 font-bold text-[#5b9bd5]">极光下载站</span>
        <span className="font-['Liberation_Sans',sans-serif] text-[17px] leading-5 text-[#4fbd6f]">www.xz7.com</span>
      </div>
    </div>
  );
}

export default function App() {
  return (
    <div className="relative flex h-screen flex-col overflow-hidden bg-[#f5f7fa] font-['Noto_Sans','Noto_Sans_CJK_SC',sans-serif] text-xs text-[#262c3b]">
      <TitleBar />
      <MenuRow />
      <Ribbon />
      <div className="flex min-h-0 flex-1">
        <DocumentPage />
        <ScrollColumn />
        <StylePanel />
        <Rail />
      </div>
      <StatusBar />
      <div className="absolute right-[15px] bottom-[292px] z-20 flex h-[26px] items-center gap-1 rounded-md border border-[#a5a5a5] bg-white px-[5px] text-[13px] text-[#333] shadow-[0_1px_4px_rgba(0,0,0,0.5)]">
        CH
        <Svg w={11} h={12} sw={1.1}>
          <path d="M5.500.8c6 2 6 10-1 10.400C2.500 11.200 1 10 .6 8.500c4 .5 6-3.500 4.900-7.700z" />
        </Svg>
        简
      </div>
      <Watermark />
    </div>
  );
}
